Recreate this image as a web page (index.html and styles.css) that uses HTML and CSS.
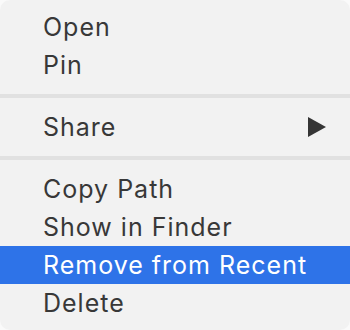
FILE: index.html
```html
<!DOCTYPE html>
<html>
<head>
<meta charset="utf-8">
<link rel="stylesheet" href="styles.css">
</head>
<body>
<div class="menu">
  <div class="item">Open</div>
  <div class="item">Pin</div>
  <div class="sep"></div>
  <div class="item has-sub">Share<span class="arrow"></span></div>
  <div class="sep"></div>
  <div class="item">Copy Path</div>
  <div class="item">Show in Finder</div>
  <div class="item active">Remove from Recent</div>
  <div class="item">Delete</div>
</div>
</body>
</html>
```
FILE: styles.css
```css
html, body {
  margin: 0;
  padding: 0;
  background: #fafafa;
}
.menu {
  width: 350px;
  height: 330px;
  box-sizing: border-box;
  background: #f2f2f2;
  border-radius: 10px;
  overflow: hidden;
  padding: 8px 0;
  font-family: Inter, "Noto Sans", sans-serif;
  font-size: 25px;
  letter-spacing: 1px;
  color: #383838;
}
.item {
  height: 38px;
  line-height: 38px;
  padding-left: 43px;
  padding-right: 24px;
  display: flex;
  align-items: center;
  justify-content: space-between;
}
.item.active {
  background: #2e73e8;
  color: #ffffff;
}
.sep {
  height: 4px;
  margin: 10px 0;
  background: #e1e1e1;
}
.arrow {
  width: 0;
  height: 0;
  border-top: 10px solid transparent;
  border-bottom: 10px solid transparent;
  border-left: 18px solid #353535;
}
```
